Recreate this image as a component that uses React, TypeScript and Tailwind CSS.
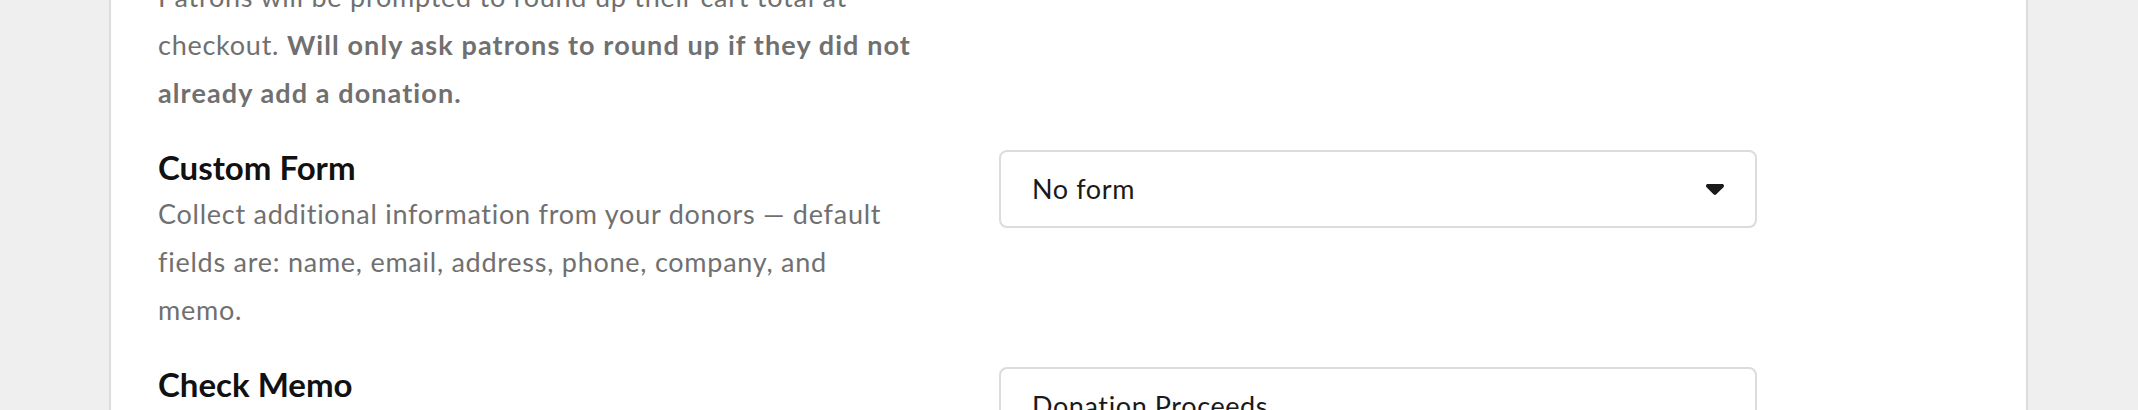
import React from "react";

const font = { fontFamily: "Lato, 'Noto Sans', sans-serif" };

function Caret() {
  return (
    <svg width="18" height="11" viewBox="0 192 320 192" fill="#1a1a1a" aria-hidden="true">
      <path d="M137.4 374.6c12.5 12.5 32.8 12.5 45.3 0l128-128c9.2-9.2 11.9-22.9 6.9-34.9s-16.6-19.8-29.6-19.8L32 192c-12.9 0-24.6 7.8-29.6 19.8s-2.2 25.7 6.9 34.9l128 128z" />
    </svg>
  );
}

function Row({
  title,
  children,
  control,
}: {
  title: string;
  children: React.ReactNode;
  control: React.ReactNode;
}) {
  return (
    <div className="flex gap-[83px]">
      <div className="w-[758px] shrink-0">
        <h3 className="text-[33px] leading-[40px] font-bold text-[#111111]">{title}</h3>
        <p className="mt-[3px] text-[27px] leading-[48px] tracking-[0.75px] text-[#707070]">{children}</p>
      </div>
      <div className="w-[758px] shrink-0 pt-[3px]">{control}</div>
    </div>
  );
}

export default function App() {
  return (
    <div className="h-[410px] overflow-hidden bg-[#efefef]" style={font}>
      <div className="ml-[109px] w-[1919px] h-full bg-white border-x-2 border-[#dcdcdc] overflow-hidden">
        <div className="pl-[47px] -mt-[27px] flex flex-col gap-[30px]">
          <p className="w-[800px] text-[27px] leading-[48px] tracking-[0.75px] text-[#707070]">
            Patrons will be prompted to round up their cart total at
            <br />
            checkout.{" "}
            <span className="font-bold tracking-[1.1px]">Will only ask patrons to round up if they did not</span>
            <br />
            <span className="font-bold tracking-[1.1px]">already add a donation.</span>
          </p>
          <Row
            title="Custom Form"
            control={
              <div className="h-[78px] border-2 border-[#dcdcdc] rounded-[8px] flex items-center justify-between px-[31px] bg-white">
                <span className="text-[27px] tracking-[0.6px] text-[#1a1a1a]">No form</span>
                <Caret />
              </div>
            }
          >
            Collect additional information from your donors — default
            <br />
            fields are: name, email, address, phone, company, and
            <br />
            memo.
          </Row>
          <Row
            title="Check Memo"
            control={
              <div className="h-[78px] border-2 border-[#dcdcdc] rounded-[8px] flex items-center px-[31px] bg-white">
                <span className="text-[27px] tracking-[0.6px] text-[#1a1a1a]">Donation Proceeds</span>
              </div>
            }
          >
            The memo printed on checks.
          </Row>
        </div>
      </div>
    </div>
  );
}
